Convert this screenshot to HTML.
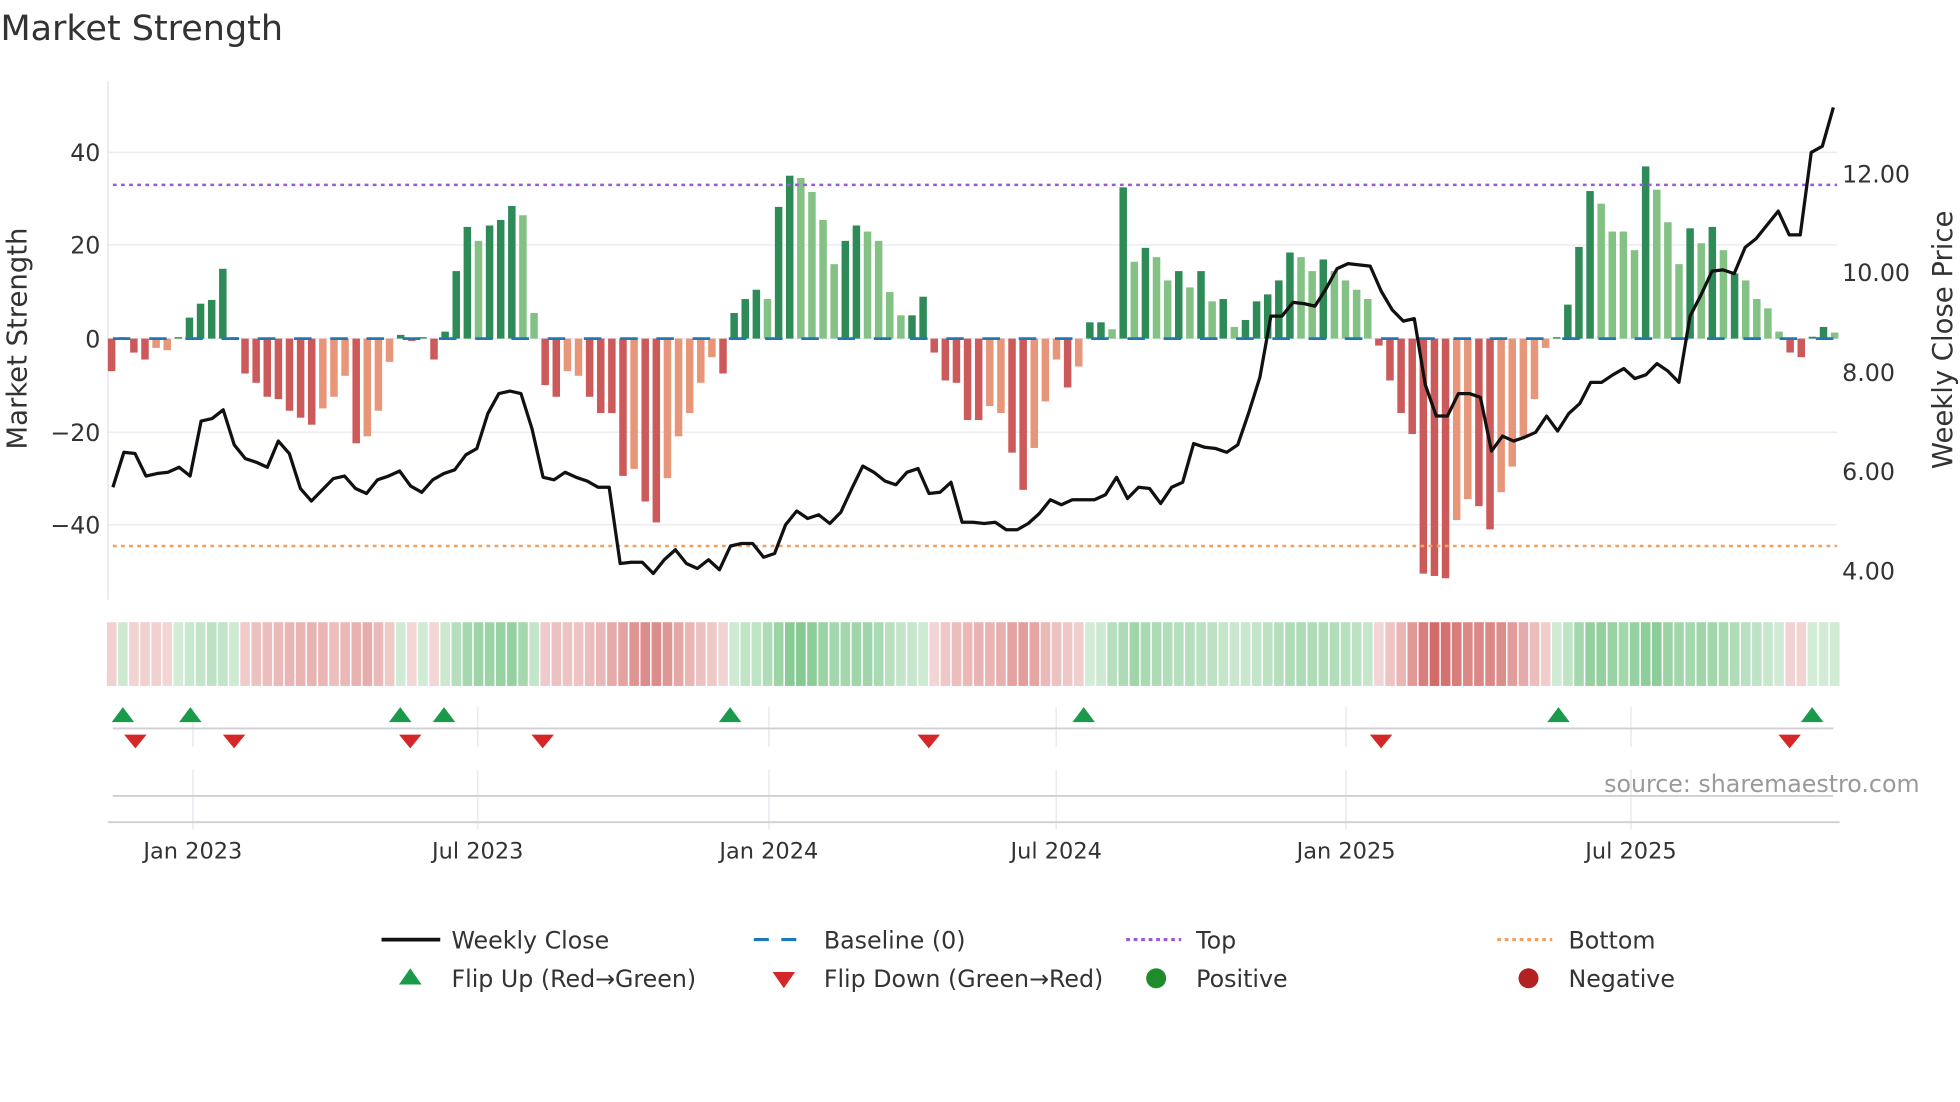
<!DOCTYPE html>
<html><head><meta charset="utf-8"><style>
html,body{margin:0;padding:0;background:#fff;}
svg{display:block;font-family:"DejaVu Sans","Liberation Sans",sans-serif;}
</style></head><body>
<svg id="s" width="1960" height="1102" viewBox="0 0 1568 882" xmlns="http://www.w3.org/2000/svg">
<text x="0" y="32" font-size="28" fill="#333">Market Strength</text>
<g id="grid"></g>
<g id="bars"></g>
<g id="heat"></g>
<g id="marks"></g>
<g id="legend" font-size="19" fill="#333">
<line x1="305" y1="752" x2="352" y2="752" stroke="#111" stroke-width="3"/>
<text x="361" y="759">Weekly Close</text>
<line x1="603" y1="752" x2="645" y2="752" stroke="#1f77b4" stroke-width="2.5" stroke-dasharray="12,10"/>
<text x="659" y="759">Baseline (0)</text>
<line x1="901" y1="752" x2="945" y2="752" stroke="#9b59d6" stroke-width="2.5" stroke-dasharray="3,3"/>
<text x="957" y="759">Top</text>
<line x1="1198" y1="752" x2="1242" y2="752" stroke="#f0a060" stroke-width="2.5" stroke-dasharray="3,3"/>
<text x="1255" y="759">Bottom</text>
<polygon points="319,788 337,788 328,775" fill="#1a9a4a"/>
<text x="361" y="790">Flip Up (Red→Green)</text>
<polygon points="618,778 636,778 627,791" fill="#d62728"/>
<text x="659" y="790">Flip Down (Green→Red)</text>
<circle cx="925" cy="783" r="8" fill="#1e8c2a"/>
<text x="957" y="790">Positive</text>
<circle cx="1223" cy="783" r="8" fill="#b22222"/>
<text x="1255" y="790">Negative</text>
</g>
</svg>
<script>
var NS="http://www.w3.org/2000/svg";
function el(p,t,a,txt){var e=document.createElementNS(NS,t);for(var k in a)e.setAttribute(k,a[k]);if(txt!=null)e.textContent=txt;document.getElementById(p).appendChild(e);return e;}
var vals=[-7,0.3,-3,-4.5,-2,-2.5,0.3,4.5,7.5,8.3,15,0.3,-7.5,-9.5,-12.5,-13,-15.5,-17,-18.5,-15,-12.5,-8,-22.5,-21,-15.5,-5,0.8,-0.5,0.3,-4.5,1.5,14.5,24,21,24.3,25.5,28.5,26.5,5.5,
-10,-12.5,-7,-8,-12.5,-16,-16,-29.5,-28,-35,-39.5,-30,-21,-16,-9.5,-4,-7.5,5.5,8.5,10.5,8.5,28.3,35,34.5,31.5,25.5,16,21,24.3,23,21,10,5,5,9,
-3,-9,-9.5,-17.5,-17.5,-14.5,-16,-24.5,-32.5,-23.5,-13.5,-4.5,-10.5,-6,3.5,3.5,2,32.5,16.5,19.5,17.5,12.5,14.5,11,14.5,8,8.5,2.5,4,8,9.5,12.5,18.5,17.5,14.5,17,14.5,12.5,10.5,8.5,
-1.5,-9,-16,-20.5,-50.5,-51,-51.5,-39,-34.5,-36,-41,-33,-27.5,-21,-13,-2,0.3,7.3,19.7,31.7,29,23,23,19,37,32,25,16,23.7,20.5,24,19,14,12.5,8.5,6.5,1.5,-3,-4,0.4,2.5,1.3];
var cls="rdrrssdddddd"+"rrrrrrr"+"sss"+"r"+"sss"+"drdr"+"dddldddll"+"rrssrrrrsrr"+"sssss"+"r"+"dddlddllllddlllldd"+
"rrrrrssrrsssrs"+"ddldldlldldldldddddlldllll"+
"rrrrrrrssrrsssss"+
"ddddlllldllldldldllllrrddl";
var C={d:"#2e8a57",l:"#84c184",r:"#cc5a5a",s:"#e8967a"};
var x0=89,z=271,u=3.725,dx=(1468-89)/(vals.length-1);
[122,196,271,346,420].forEach(function(y){el("grid","line",{x1:86,x2:1470,y1:y,y2:y,stroke:"#ececf2","stroke-width":1.2});});
el("grid","line",{x1:86,x2:86,y1:65,y2:480,stroke:"#e6e6ec","stroke-width":1.2});
[["40",122],["20",196],["0",271],["−20",346],["−40",420]].forEach(function(t){el("grid","text",{x:80,y:t[1]+7,"font-size":19,fill:"#333","text-anchor":"end"},t[0]);});
[["12.00",139],["10.00",218],["8.00",298],["6.00",377],["4.00",457]].forEach(function(t){el("grid","text",{x:1474,y:t[1]+7,"font-size":19,fill:"#333"},t[0]);});
el("grid","text",{x:0,y:0,"font-size":22,fill:"#333","text-anchor":"middle",transform:"translate(21,271) rotate(-90)"},"Market Strength");
el("grid","text",{x:0,y:0,"font-size":22,fill:"#333","text-anchor":"middle",transform:"translate(1562,272) rotate(-90)"},"Weekly Close Price");
for(var i=0;i<vals.length;i++){var v=vals[i],x=x0+i*dx-3;var c=cls[i];var col=C[c]||(v>=0?C.d:C.r);
if(v>=0&&(c=="r"||c=="s"))col=C.d;if(v<0&&(c=="d"||c=="l"))col=C.r;
var h=Math.abs(v)*u;el("bars","rect",{x:x,y:v>=0?z-h:z,width:6,height:Math.max(h,0.8),fill:col});}
el("bars","line",{x1:90,x2:1470,y1:148,y2:148,stroke:"#9b59d6","stroke-width":2,"stroke-dasharray":"3,3.5"});
el("bars","line",{x1:90,x2:1470,y1:437,y2:437,stroke:"#f0a060","stroke-width":2,"stroke-dasharray":"3,3.5"});
el("bars","line",{x1:90,x2:1470,y1:271,y2:271,stroke:"#1f77b4","stroke-width":2.2,"stroke-dasharray":"14,15"});
var py=[390,362,363,381,379,378,374,381,337,335,328,356,367,370,374,353,363,391,401,392,383,381,391,395,384,381,377,389,394,384,379,376,364,359,331,315,313,315,343,382,384,378,382,385,390,390,451,450,450,459,448,440,451,455,448,456,437,435,435,446,443,420,409,415,412,419,410,391,373,378,385,388,378,375,395,394,386,418,418,419,418,424,424,419,411,400,404,400,400,400,396,382,399,390,391,403,390,386,355,358,359,362,356,330,302,253,253,242,243,245,231,215,211,212,213,233,248,257,255,308,333,333,315,315,318,361,349,353,350,346,333,345,331,323,306,306,300,295,303,300,291,297,306,253,236,217,216,219,198,191,180,169,188,188,122,117,86];
var pts=py.map(function(y,i){return (90+i*(1377/(py.length-1))).toFixed(1)+","+y;}).join(" ");
el("bars","polyline",{points:pts,fill:"none",stroke:"#111","stroke-width":2.6,"stroke-linejoin":"round"});
for(var i=0;i<vals.length;i++){var s=0,n=0;for(var k=-1;k<=1;k++){if(vals[i+k]!=null){s+=vals[i+k];n++;}}var v=s/n;var sg=vals[i]>=0?1:-1;
var a=0.22+0.6*Math.min(Math.abs(v),50)/50;var col=sg>0?"rgba(60,170,80,"+a+")":"rgba(200,75,72,"+a+")";
el("heat","rect",{x:x0+i*dx-3.8,y:498,width:dx-1.2,height:51,fill:col});}
[154,382,615,845,1077,1305].forEach(function(x,j){el("marks","line",{x1:x,x2:x,y1:566,y2:598,stroke:"#eaeaf0","stroke-width":1.2});el("marks","line",{x1:x,x2:x,y1:616,y2:664,stroke:"#eaeaf0","stroke-width":1.2});
el("marks","text",{x:x,y:687,"font-size":18,fill:"#333","text-anchor":"middle"},["Jan 2023","Jul 2023","Jan 2024","Jul 2024","Jan 2025","Jul 2025"][j]);});
el("marks","line",{x1:90,x2:1467,y1:583,y2:583,stroke:"#d0d0d4","stroke-width":1.5});
el("marks","line",{x1:90,x2:1467,y1:637,y2:637,stroke:"#d0d0d4","stroke-width":1.5});
el("marks","line",{x1:86,x2:1472,y1:658,y2:658,stroke:"#d0d0d4","stroke-width":1.5});
[98,152,320,355,584,867,1247,1450].forEach(function(x){el("marks","polygon",{points:(x-9)+",578 "+(x+9)+",578 "+x+",566",fill:"#1a9a4a"});});
[108,187,328,434,743,1105,1432].forEach(function(x){el("marks","polygon",{points:(x-9)+",588 "+(x+9)+",588 "+x+",599",fill:"#d62728"});});
el("marks","text",{x:1536,y:634,"font-size":19,fill:"#999","text-anchor":"end"},"source: sharemaestro.com");
</script>
</body></html>
